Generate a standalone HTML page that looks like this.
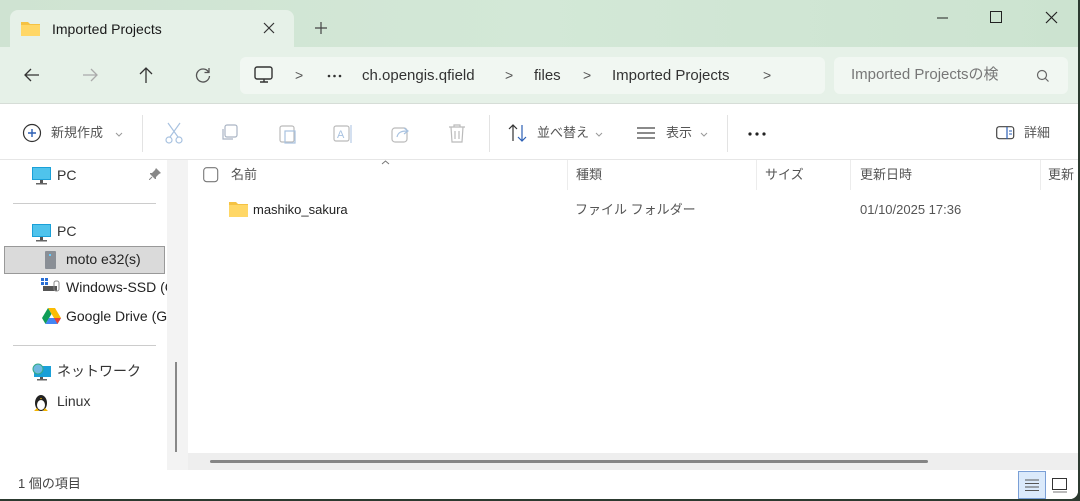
<!DOCTYPE html>
<html><head><meta charset="utf-8"><style>
*{margin:0;padding:0;box-sizing:border-box}
body{width:1080px;height:501px;overflow:hidden;background:#2c3a30;font-family:"Liberation Sans","Noto Sans CJK JP",sans-serif;font-size:14px;color:#1a1a1a;position:relative}
.win{position:absolute;left:0;top:0;width:1078px;height:499px;background:#fff;border-radius:0 0 8px 0;overflow:hidden}
.title{position:absolute;left:0;top:0;width:1078px;height:47px;background:linear-gradient(90deg,#cfe3d2,#d3e8d7 50%,#cce3d0)}
.tab{position:absolute;left:10px;top:10px;width:284px;height:38px;background:#e6f1e8;border-radius:8px 8px 0 0}
.nav{position:absolute;left:0;top:47px;width:1078px;height:57px;background:#e6f1e8;border-bottom:1px solid #d6ddd7}
.addr{position:absolute;left:240px;top:10px;width:585px;height:37px;background:#f1f7f2;border-radius:6px}
.search{position:absolute;left:834px;top:10px;width:234px;height:37px;background:#f1f7f2;border-radius:6px}
.t{position:absolute;white-space:nowrap;line-height:18px}
.g{color:#555}
.tool{position:absolute;left:0;top:105px;width:1078px;height:55px;background:#fff;border-bottom:1px solid #e6e6e6}
.sep{position:absolute;width:1px;background:#e3e3e3}
.side{position:absolute;left:0;top:160px;width:167px;height:310px;background:#fff}
.strip{position:absolute;left:167px;top:160px;width:21px;height:310px;background:#f3f3f3}
.hs{position:absolute;left:188px;top:453px;width:890px;height:17px;background:#eeeeee}
.status{position:absolute;left:0;top:470px;width:1078px;height:29px;background:#fff}
.col{position:absolute;top:160px;width:1px;height:30px;background:#ececec}
svg{position:absolute}
</style></head><body><div class="win">
<div class="title"></div>
<div class="tab"></div>
<svg style="left:21px;top:20px" width="19" height="16"><path d="M0 2h7l2 2h10v12H0z" fill="#f5c243"/><rect x="0" y="5" width="19" height="11" fill="#ffd766"/></svg>
<div class="t" style="left:52px;top:20px;font-size:14px">Imported Projects</div>
<svg style="left:263px;top:22px" width="12" height="12"><path d="M1 1l10 10M11 1L1 11" stroke="#333" stroke-width="1.2"/></svg>
<svg style="left:315px;top:22px" width="12" height="12"><path d="M6 0v12M0 6h12" stroke="#444" stroke-width="1.2"/></svg>
<svg style="left:937px;top:17px" width="12" height="2"><path d="M0 1h11" stroke="#222"/></svg>
<svg style="left:990px;top:11px" width="13" height="13"><rect x=".5" y=".5" width="11" height="11" fill="none" stroke="#222"/></svg>
<svg style="left:1045px;top:11px" width="13" height="13"><path d="M1 1l11 11M12 1L1 12" stroke="#222" stroke-width="1.2"/></svg>
<div class="nav">
<div class="addr"></div><div class="search"></div>
<svg style="left:24px;top:21px" width="16" height="14"><path d="M15 7H1M7 1L1 7l6 6" fill="none" stroke="#333" stroke-width="1.3"/></svg>
<svg style="left:82px;top:21px" width="16" height="14"><path d="M1 7h14M9 1l6 6-6 6" fill="none" stroke="#aaa" stroke-width="1.3"/></svg>
<svg style="left:139px;top:20px" width="14" height="16"><path d="M7 16V1M1 7l6-6 6 6" fill="none" stroke="#333" stroke-width="1.3"/></svg>
<svg style="left:195px;top:20px" width="16" height="16"><path d="M13.5 5A6.5 6.5 0 1 0 14.5 9" fill="none" stroke="#555" stroke-width="1.3"/><path d="M14 1v4.5H9.5" fill="none" stroke="#555" stroke-width="1.3"/></svg>
<svg style="left:254px;top:19px" width="20" height="18"><rect x="1" y="1" width="17" height="12" rx="2" fill="none" stroke="#333" stroke-width="1.4"/><path d="M6 16h8M10 13v3" stroke="#333" stroke-width="1.4"/></svg>
<div class="t g" style="left:295px;top:19px">&gt;</div>
<svg style="left:327px;top:27px" width="16" height="4"><circle cx="2" cy="2" r="1.3" fill="#333"/><circle cx="7.5" cy="2" r="1.3" fill="#333"/><circle cx="13" cy="2" r="1.3" fill="#333"/></svg>
<div class="t" style="left:362px;top:20px;font-size:15px;color:#333">ch.opengis.qfield</div>
<div class="t g" style="left:505px;top:19px">&gt;</div>
<div class="t" style="left:534px;top:20px;font-size:15px;color:#333">files</div>
<div class="t g" style="left:583px;top:19px">&gt;</div>
<div class="t" style="left:612px;top:20px;font-size:15px;color:#333">Imported Projects</div>
<div class="t g" style="left:763px;top:19px">&gt;</div>
<div class="t" style="left:851px;top:19px;font-size:15px;color:#777">Imported Projectsの検</div>
<svg style="left:1036px;top:22px" width="14" height="14"><circle cx="6" cy="6" r="4.5" fill="none" stroke="#666" stroke-width="1.2"/><path d="M9.5 9.5l3 3" stroke="#666" stroke-width="1.2"/></svg>
</div>
<div class="tool">
<svg style="left:22px;top:18px" width="20" height="20"><circle cx="10" cy="10" r="8.5" fill="none" stroke="#333" stroke-width="1.2"/><path d="M10 6v8M6 10h8" stroke="#2b5fb5" stroke-width="1.4"/></svg>
<div class="t" style="left:51px;top:19px;font-size:13px;color:#555">新規作成</div>
<svg style="left:115px;top:27px" width="8" height="5"><path d="M1 1l3 3 3-3" fill="none" stroke="#999"/></svg>
<div class="sep" style="left:142px;top:10px;height:37px"></div>
<svg style="left:164px;top:17px" width="20" height="22"><path d="M4 1l10 14M16 1L6 15" stroke="#a8c2e0" stroke-width="1.2"/><circle cx="5" cy="18" r="3" fill="none" stroke="#a8c2e0" stroke-width="1.2"/><circle cx="15" cy="18" r="3" fill="none" stroke="#a8c2e0" stroke-width="1.2"/></svg>
<svg style="left:220px;top:19px" width="20" height="20"><rect x="5" y="1" width="12" height="12" rx="2" fill="none" stroke="#aab5c4" stroke-width="1.2"/><path d="M3 5v10h10" fill="none" stroke="#aab5c4" stroke-width="1.2"/></svg>
<svg style="left:278px;top:18px" width="20" height="22"><rect x="2" y="3" width="14" height="16" rx="2" fill="none" stroke="#bbb" stroke-width="1.2"/><rect x="7" y="8" width="10" height="12" fill="none" stroke="#a8c2e0" stroke-width="1.2"/></svg>
<svg style="left:333px;top:19px" width="22" height="20"><rect x="1" y="2" width="15" height="15" rx="2" fill="none" stroke="#bbb" stroke-width="1.2"/><text x="4" y="14" font-size="11" fill="#a8c2e0" font-family="Liberation Sans">A</text><path d="M18 1v18" stroke="#a8c2e0"/></svg>
<svg style="left:391px;top:19px" width="20" height="20"><rect x="1" y="4" width="15" height="14" rx="3" fill="none" stroke="#bbb" stroke-width="1.2"/><path d="M6 13c1-5 5-6 10-6M13 4l4 3-4 3" fill="none" stroke="#a8c2e0" stroke-width="1.2"/></svg>
<svg style="left:448px;top:18px" width="18" height="20"><path d="M1 4h16M6 4V2h6v2M3 4l1 15h10l1-15M7 8v8M11 8v8" fill="none" stroke="#bbb" stroke-width="1.2"/></svg>
<div class="sep" style="left:489px;top:10px;height:37px"></div>
<svg style="left:508px;top:19px" width="20" height="18"><path d="M5 17V1M1 5l4-4 4 4" fill="none" stroke="#333" stroke-width="1.2"/><path d="M14 1v16M10 13l4 4 4-4" fill="none" stroke="#2b5fb5" stroke-width="1.2"/></svg>
<div class="t" style="left:537px;top:19px;font-size:13px;color:#555">並べ替え</div>
<svg style="left:595px;top:27px" width="8" height="5"><path d="M1 1l3 3 3-3" fill="none" stroke="#999"/></svg>
<svg style="left:637px;top:22px" width="18" height="12"><path d="M0 1h18M0 6h18M0 11h18" stroke="#444" stroke-width="1.2"/></svg>
<div class="t" style="left:666px;top:19px;font-size:13px;color:#555">表示</div>
<svg style="left:700px;top:27px" width="8" height="5"><path d="M1 1l3 3 3-3" fill="none" stroke="#999"/></svg>
<div class="sep" style="left:727px;top:10px;height:37px"></div>
<svg style="left:748px;top:27px" width="20" height="4"><circle cx="2" cy="2" r="1.6" fill="#222"/><circle cx="9" cy="2" r="1.6" fill="#222"/><circle cx="16" cy="2" r="1.6" fill="#222"/></svg>
<svg style="left:996px;top:21px" width="20" height="14"><rect x=".7" y=".7" width="17" height="12" rx="2.5" fill="none" stroke="#444" stroke-width="1.2"/><path d="M11 1v12" stroke="#2b5fb5" stroke-width="1.2"/><path d="M13 5h3M13 8h3" stroke="#2b5fb5"/></svg>
<div class="t" style="left:1024px;top:19px;font-size:13px;color:#555">詳細</div>
</div>
<div class="side">
<svg style="left:32px;top:7px" width="20" height="18"><rect x="0" y="0" width="19" height="13" fill="#1aa0d8"/><rect x="1" y="1" width="17" height="11" fill="#4fc3ec"/><rect x="8" y="13" width="3" height="3" fill="#555"/><rect x="4" y="16" width="11" height="1.5" fill="#666"/></svg>
<div class="t" style="left:57px;top:6px;color:#333">PC</div>
<svg style="left:149px;top:8px" width="12" height="12"><path d="M7 0l5 5-2 1-3 3 0 2-1 0-5-5 0-1 2 0 3-3z" fill="#888"/><path d="M3 9L0 12" stroke="#888"/></svg>
<div style="position:absolute;left:13px;top:43px;width:143px;height:1px;background:#ccc"></div>
<svg style="left:32px;top:64px" width="20" height="18"><rect x="0" y="0" width="19" height="13" fill="#1aa0d8"/><rect x="1" y="1" width="17" height="11" fill="#4fc3ec"/><rect x="8" y="13" width="3" height="3" fill="#555"/><rect x="4" y="16" width="11" height="1.5" fill="#666"/></svg>
<div class="t" style="left:57px;top:62px;color:#333">PC</div>
<div style="position:absolute;left:4px;top:86px;width:161px;height:28px;background:#dadada;border:1px solid #999"></div>
<svg style="left:45px;top:91px" width="12" height="19"><rect x="0" y="0" width="11" height="18" rx="1" fill="#8a8f96"/><rect x="4" y="3" width="2" height="2" fill="#6cf"/></svg>
<div class="t" style="left:66px;top:90px;color:#222">moto e32(s)</div>
<svg style="left:41px;top:118px" width="20" height="16"><rect x="0" y="0" width="3" height="3" fill="#2a6fd6"/><rect x="4" y="0" width="3" height="3" fill="#2a6fd6"/><rect x="0" y="4" width="3" height="3" fill="#2a6fd6"/><rect x="4" y="4" width="3" height="3" fill="#2a6fd6"/><rect x="2" y="8" width="14" height="5" fill="#555"/><rect x="13" y="3" width="5" height="10" rx="2" fill="none" stroke="#888"/></svg>
<div class="t" style="left:66px;top:118px;color:#222">Windows-SSD (C</div>
<svg style="left:42px;top:148px" width="19" height="17"><path d="M6 0h7l6 10h-7z" fill="#fbbc04"/><path d="M6 0L0 10l3.5 6L9.5 6z" fill="#0f9d58"/><path d="M3.5 16h12l3.5-6H7z" fill="#4285f4"/><path d="M12 10h7l-3.5 6" fill="#ea4335"/></svg>
<div class="t" style="left:66px;top:147px;color:#222">Google Drive (G</div>
<div style="position:absolute;left:13px;top:185px;width:143px;height:1px;background:#ccc"></div>
<svg style="left:32px;top:203px" width="20" height="18"><rect x="2" y="3" width="17" height="11" fill="#1aa0d8"/><circle cx="6" cy="6" r="5" fill="#6fb8e0" stroke="#3a8"/><rect x="8" y="14" width="3" height="2" fill="#555"/><rect x="5" y="16" width="10" height="1.5" fill="#666"/></svg>
<div class="t" style="left:57px;top:202px;color:#333">ネットワーク</div>
<svg style="left:33px;top:232px" width="16" height="20"><ellipse cx="8" cy="11" rx="6" ry="8" fill="#222"/><ellipse cx="8" cy="13" rx="4" ry="5" fill="#fff"/><path d="M1 19l3-3 2 3zM15 19l-3-3-2 3z" fill="#f4b400"/><path d="M7 6h2l-1 1.5z" fill="#f4b400"/></svg>
<div class="t" style="left:57px;top:232px;color:#333">Linux</div>
</div>
<div class="strip"><div style="position:absolute;left:8px;top:202px;width:2px;height:90px;background:#888"></div></div>
<div class="col" style="left:567px"></div><div class="col" style="left:756px"></div><div class="col" style="left:850px"></div><div class="col" style="left:1040px"></div>
<svg style="left:203px;top:167px" width="16" height="16"><rect x=".7" y=".7" width="14" height="14" rx="3" fill="none" stroke="#777" stroke-width="1.1"/></svg>
<div class="t" style="left:231px;top:166px;font-size:13px;color:#555">名前</div>
<svg style="left:381px;top:160px" width="9" height="5"><path d="M1 4l3.5-3 3.5 3" fill="none" stroke="#777"/></svg>
<div class="t" style="left:576px;top:166px;font-size:13px;color:#555">種類</div>
<div class="t" style="left:765px;top:166px;font-size:13px;color:#555">サイズ</div>
<div class="t" style="left:860px;top:166px;font-size:13px;color:#555">更新日時</div>
<div class="t" style="left:1048px;top:166px;font-size:13px;color:#555">更新</div>
<svg style="left:229px;top:202px" width="19" height="15"><path d="M0 0h7l2 2h10v13H0z" fill="#f5c243"/><rect x="0" y="3" width="19" height="12" fill="#ffd766"/></svg>
<div class="t" style="left:253px;top:201px;font-size:13px;color:#222">mashiko_sakura</div>
<div class="t" style="left:575px;top:201px;font-size:13px;color:#555">ファイル フォルダー</div>
<div class="t" style="left:860px;top:201px;font-size:13px;color:#555">01/10/2025 17:36</div>
<div class="hs"><div style="position:absolute;left:22px;top:7px;width:718px;height:3px;background:#858585;border-radius:2px"></div></div>
<div class="status">
<div class="t" style="left:18px;top:5px;font-size:13px;color:#444">1 個の項目</div>
<div style="position:absolute;left:1018px;top:1px;width:28px;height:28px;background:#dbeafb;border:1px solid #7a9fd6"></div>
<svg style="left:1025px;top:9px" width="14" height="12"><path d="M0 1h14M0 4.5h14M0 8h14M0 11.5h14" stroke="#555"/></svg>
<svg style="left:1052px;top:8px" width="16" height="15"><rect x=".5" y=".5" width="14" height="11" fill="none" stroke="#333"/><path d="M1 14h14" stroke="#777"/></svg>
</div>
</div></body></html>
